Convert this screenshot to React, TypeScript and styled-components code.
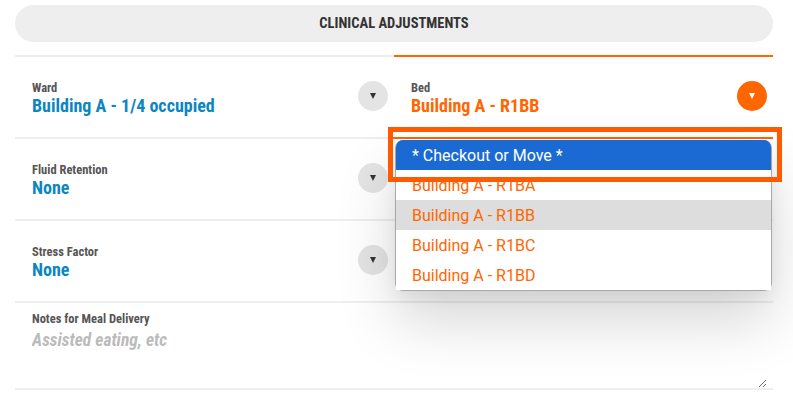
import React from 'react';
import styled, { createGlobalStyle } from 'styled-components';

const GlobalStyle = createGlobalStyle`
	html, body {
		margin: 0;
		padding: 0;
		background: #ffffff;
		font-family: Roboto, 'Liberation Sans', sans-serif;
	}
`;

const ORANGE = '#ff6600';
const BLUE = '#0b86c0';

const leftFields = [
	{ label: 'Ward', value: 'Building A - 1/4 occupied' },
	{ label: 'Fluid Retention', value: 'None' },
	{ label: 'Stress Factor', value: 'None' },
];

const bedOptions = ['Building A - R1BA', 'Building A - R1BB', 'Building A - R1BC', 'Building A - R1BD'];

export default function App() {
	return (
		<Page>
			<GlobalStyle />
			<Header>CLINICAL ADJUSTMENTS</Header>
			<Tabs>
				<Tab />
				<Tab active />
			</Tabs>
			<FieldGrid>
				<Field>
					<FieldText>
						<Label>{leftFields[0].label}</Label>
						<Value>{leftFields[0].value}</Value>
					</FieldText>
					<RoundButton>
						<Caret />
					</RoundButton>
				</Field>
				<Field active right>
					<FieldText>
						<Label>Bed</Label>
						<Value active>Building A - R1BB</Value>
					</FieldText>
					<RoundButton active>
						<Caret active />
					</RoundButton>
					<Dropdown>
						<Option selected>* Checkout or Move *</Option>
						{bedOptions.map((opt) => (
							<Option key={opt} hovered={opt === 'Building A - R1BB'}>
								{opt}
							</Option>
						))}
						<Highlight />
					</Dropdown>
				</Field>
				{leftFields.slice(1).map((field) => (
					<React.Fragment key={field.label}>
						<Field>
							<FieldText>
								<Label>{field.label}</Label>
								<Value>{field.value}</Value>
							</FieldText>
							<RoundButton>
								<Caret />
							</RoundButton>
						</Field>
						<Field right />
					</React.Fragment>
				))}
			</FieldGrid>
			<Notes>
				<Label>Notes for Meal Delivery</Label>
				<NotesInput placeholder="Assisted eating, etc" />
			</Notes>
		</Page>
	);
}

const Page = styled.div`
	width: 758px;
	padding: 5px 20px 0 15px;
`;

const Header = styled.div`
	height: 37px;
	border-radius: 19px;
	background: #eeeeee;
	display: flex;
	align-items: center;
	justify-content: center;
	font-size: 14.5px;
	font-weight: 700;
	font-stretch: condensed;
	color: #333333;
`;

const Tabs = styled.div`
	display: flex;
	margin-top: 13px;
`;

const Tab = styled.div<{ active?: boolean }>`
	flex: 1;
	height: 2px;
	background: ${(p) => (p.active ? ORANGE : '#eeeeee')};
`;

const FieldGrid = styled.div`
	display: grid;
	grid-template-columns: 378px 380px;
`;

const Field = styled.div<{ active?: boolean; right?: boolean }>`
	position: relative;
	height: 80px;
	display: flex;
	align-items: center;
	padding: 0 ${(p) => (p.right ? '6px' : '5px')} 0 ${(p) => (p.right ? '18px' : '17px')};
	border-bottom: 2px solid ${(p) => (p.active ? ORANGE : '#eeeeee')};
`;

const FieldText = styled.div`
	flex: 1;
	display: flex;
	flex-direction: column;
	gap: 0;
	padding-top: 1px;
`;

const Label = styled.div`
	font-size: 12.5px;
	font-weight: 700;
	font-stretch: condensed;
	color: #555555;
`;

const Value = styled.div<{ active?: boolean }>`
	font-size: 18px;
	font-weight: 700;
	font-stretch: condensed;
	color: ${(p) => (p.active ? ORANGE : BLUE)};
`;

const RoundButton = styled.div<{ active?: boolean }>`
	width: 30px;
	height: 30px;
	border-radius: 50%;
	background: ${(p) => (p.active ? ORANGE : '#e4e4e4')};
	display: flex;
	align-items: center;
	justify-content: center;
	margin-bottom: 2px;
`;

const Caret = styled.div<{ active?: boolean }>`
	width: 0;
	height: 0;
	border-left: 3.5px solid transparent;
	border-right: 3.5px solid transparent;
	border-top: 6px solid ${(p) => (p.active ? '#ffffff' : '#333333')};
`;

const Dropdown = styled.div`
	position: absolute;
	top: calc(100% + 3px);
	left: 2px;
	right: 1px;
	z-index: 5;
	background: #ffffff;
	border: 1px solid #a8a8a8;
	border-radius: 8px;
	box-shadow: 0 30px 60px rgba(0, 0, 0, 0.16), 0 6px 16px rgba(0, 0, 0, 0.06);
`;

const Option = styled.div<{ selected?: boolean; hovered?: boolean }>`
	height: 30px;
	display: flex;
	align-items: center;
	padding-left: 16px;
	font-size: 16px;
	color: ${(p) => (p.selected ? '#ffffff' : ORANGE)};
	background: ${(p) => (p.selected ? '#1b69d3' : p.hovered ? '#dddddd' : '#ffffff')};
	&:first-child {
		border-radius: 7px 7px 0 0;
		margin-top: -1px;
	}
	&:last-of-type {
		border-radius: 0 0 7px 7px;
	}
`;

const Highlight = styled.div`
	position: absolute;
	left: -8px;
	top: -14px;
	width: 384px;
	height: 45px;
	border: 5px solid #ff5a00;
	pointer-events: none;
`;

const Notes = styled.div`
	padding: 8px 0 0 17px;
	height: 77px;
	border-bottom: 2px solid #eeeeee;
	display: flex;
	flex-direction: column;
	gap: 4px;
	position: relative;
`;

const NotesInput = styled.textarea`
	flex: 1;
	border: none;
	outline: none;
	resize: vertical;
	padding: 0;
	margin-right: 6px;
	font-family: Roboto, 'Liberation Sans', sans-serif;
	font-size: 17.5px;
	font-weight: 700;
	font-style: italic;
	font-stretch: condensed;
	color: #333333;
	background: transparent;
	&::placeholder {
		color: #bbbbbb;
	}
`;
